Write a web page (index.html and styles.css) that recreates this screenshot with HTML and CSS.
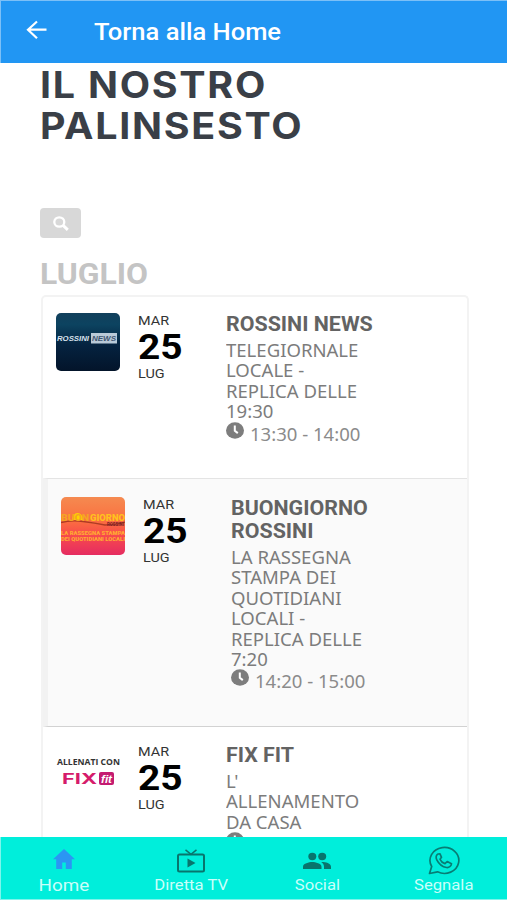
FILE: index.html
```html
<!DOCTYPE html>
<html lang="it">
<head>
<meta charset="utf-8">
<meta name="viewport" content="width=device-width, initial-scale=1">
<title>Il nostro palinsesto</title>
<link rel="stylesheet" href="styles.css">
</head>
<body>
<svg class="defs" width="0" height="0">
  <symbol id="clock" viewBox="0 0 18 17"><ellipse cx="9" cy="8.5" rx="9" ry="8.3" fill="#7d7d7d"/><path d="M8.8 3.5v5.2l3 2.4" fill="none" stroke="#fff" stroke-width="2"/></symbol>
</svg>
<div class="app">
  <header class="bar">
    <svg class="back" viewBox="0 0 22 20" width="22" height="20"><path d="M11 1.5 2 9.7l9 8.6M2.3 9.7H20.5" fill="none" stroke="#fff" stroke-width="2.2"/></svg>
    <span class="bar-title wide">Torna alla Home</span>
  </header>

  <main class="content">
    <h1><span class="wide">IL NOSTRO</span><span class="wide">PALINSESTO</span></h1>
    <button class="search" aria-label="Cerca"><svg viewBox="0 0 16 15" width="16" height="15"><ellipse cx="6.3" cy="6" rx="5" ry="4.7" fill="none" stroke="#fff" stroke-width="2.3"/><path d="m9.8 9.2 5 4.600" stroke="#fff" stroke-width="3"/></svg></button>
    <h2 class="wide">LUGLIO</h2>

    <section class="list">
      <article class="row first">
        <svg class="thumb" viewBox="0 0 64 58" width="64" height="58">
          <defs><linearGradient id="navy" x2="0" y2="1"><stop offset="0" stop-color="#12405c"/><stop offset=".2" stop-color="#0c4360"/><stop offset=".55" stop-color="#052340"/><stop offset="1" stop-color="#03142a"/></linearGradient></defs>
          <rect width="64" height="58" rx="5" fill="url(#navy)"/>
          <rect x="35" y="20" width="26" height="10.500" fill="#b9cad8"/>
          <text class="news" x="1" y="28" textLength="32" lengthAdjust="spacingAndGlyphs" fill="#dbe4ee">ROSSINI</text>
          <text class="news" x="36" y="28" textLength="24" lengthAdjust="spacingAndGlyphs" fill="#3d5470">NEWS</text>
        </svg>
        <div class="date"><span class="wide">MAR</span><b class="wide">25</b><span class="wide">LUG</span></div>
        <div class="info">
          <h3><span class="wide">ROSSINI NEWS</span></h3>
          <p><span class="wide">TELEGIORNALE</span><span class="wide">LOCALE -</span><span class="wide">REPLICA DELLE</span><span class="wide">19:30</span></p>
          <div class="time"><svg width="18" height="17"><use href="#clock"/></svg><span class="wide">13:30 - 14:00</span></div>
        </div>
      </article>

      <article class="row second">
        <svg class="thumb" viewBox="0 0 64 58" width="64" height="58">
          <defs><linearGradient id="dawn" x2="0" y2="1"><stop offset="0" stop-color="#f58a50"/><stop offset=".4" stop-color="#fb7040"/><stop offset=".65" stop-color="#f84b4c"/><stop offset="1" stop-color="#e52c61"/></linearGradient></defs>
          <rect width="64" height="58" rx="5" fill="url(#dawn)"/>
          <path d="M0 25.500Q10 23 22 24.500T44 28Q54 28 64 25" fill="none" stroke="#ae3b24" stroke-width="1.300"/>
          <path d="M11 23a5.500 7 0 0 1 11 0z" fill="#ffd500"/>
          <text class="dawn-title" x="0" y="24" textLength="28" lengthAdjust="spacingAndGlyphs" fill="#f5a524">BUON</text>
          <text class="dawn-title" x="29" y="24" textLength="35" lengthAdjust="spacingAndGlyphs" fill="#ffc01e">GIORNO</text>
          <text class="dawn-sub" x="46" y="29" textLength="17" lengthAdjust="spacingAndGlyphs" fill="#7c1f27">ROSSINI</text>
          <text class="dawn-text" x="0" y="37.500" textLength="64" lengthAdjust="spacingAndGlyphs">LA RASSEGNA STAMPA</text>
          <text class="dawn-text" x="0" y="43.500" textLength="64" lengthAdjust="spacingAndGlyphs">DEI QUOTIDIANI LOCALI</text>
        </svg>
        <div class="date"><span class="wide">MAR</span><b class="wide">25</b><span class="wide">LUG</span></div>
        <div class="info">
          <h3><span class="wide">BUONGIORNO</span><span class="wide">ROSSINI</span></h3>
          <p><span class="wide">LA RASSEGNA</span><span class="wide">STAMPA DEI</span><span class="wide">QUOTIDIANI</span><span class="wide">LOCALI -</span><span class="wide">REPLICA DELLE</span><span class="wide">7:20</span></p>
          <div class="time"><svg width="18" height="17"><use href="#clock"/></svg><span class="wide">14:20 - 15:00</span></div>
        </div>
      </article>

      <article class="row third">
        <svg class="thumb" viewBox="0 0 64 58" width="64" height="58">
          <text class="fix-top" x="1" y="20.500" textLength="63" lengthAdjust="spacingAndGlyphs">ALLENATI CON</text>
          <text class="fix" x="6" y="40" textLength="35" lengthAdjust="spacingAndGlyphs">FIX</text>
          <rect x="43" y="28" width="15" height="13" rx="2" fill="#c41b70"/>
          <text class="fit" x="45" y="38.500" textLength="11" lengthAdjust="spacingAndGlyphs">fit</text>
        </svg>
        <div class="date"><span class="wide">MAR</span><b class="wide">25</b><span class="wide">LUG</span></div>
        <div class="info">
          <h3><span class="wide">FIX FIT</span></h3>
          <p><span class="wide">L'</span><span class="wide">ALLENAMENTO</span><span class="wide">DA CASA</span></p>
          <div class="time"><svg width="18" height="17"><use href="#clock"/></svg></div>
        </div>
      </article>
    </section>
  </main>

  <nav class="tabs">
    <a class="tab home"><i><svg viewBox="0 0 24 20" width="24" height="20"><path d="M12 0 23 10.200h-3.200V20h-6v-6.500h-3.600V20h-6v-9.800H1z" fill="#2b96f3"/></svg></i><span class="wide">Home</span></a>
    <a class="tab tv"><i><svg viewBox="0 0 30 24" width="30" height="24"><g fill="none" stroke="#08756d" stroke-width="2"><rect x="2" y="5.500" width="26" height="17" rx="1.500"/><path d="m9.500.8 5.500 4.500L20.500.8" stroke-width="1.500"/></g><path d="M11.500 9.500v9l8-4.500z" fill="#08756d"/></svg></i><span class="wide">Diretta TV</span></a>
    <a class="tab social"><i><svg viewBox="0 0 30 18" width="30" height="18"><g fill="#08756d"><ellipse cx="10.300" cy="4.500" rx="4" ry="3.700"/><ellipse cx="20.200" cy="4.500" rx="4" ry="3.700"/><path d="M1 17v-2.300C1 11.500 7 10 10.200 10s9.300 1.500 9.300 4.700V17zM19.200 10.100c3.600-.2 9.800 1.200 9.800 4.600V17h-7v-2.300c0-2-1.100-3.500-2.800-4.600z"/></g></svg></i><span class="wide">Social</span></a>
    <a class="tab"><i><svg viewBox="0 0 32 29" width="32" height="29"><g fill="none" stroke="#087d74" stroke-width="1.700" stroke-linejoin="round"><path d="M1.500 27.500 3.700 20.500A14.400 13 0 1 1 9.500 25.800z"/><path d="M10 8c-2 1-2.400 3.500-1.200 5.800 2 4 5.800 7 9.800 7.700 2.300.3 4.700-1.300 4.900-3.800l-4.300-2.200-2.200 2.200c-2.300-.8-4.200-2.500-5-4.500l1.500-1.900L12 7.800z"/></g></svg></i><span class="wide">Segnala</span></a>
  </nav>
</div>
</body>
</html>
```
FILE: styles.css
```css
* { box-sizing: border-box; }
body { margin: 0; background: #fff; font-family: Roboto, "Liberation Sans", sans-serif; }
.defs { display: block; height: 0; }
.app { width: 507px; height: 900px; display: flex; flex-direction: column; overflow: hidden; }
.wide { display: block; width: max-content; white-space: nowrap; transform: scaleX(1.11); transform-origin: 0 50%; }
h1, h2, h3, p { margin: 0; }

.bar { flex: none; height: 63px; background: #2196f3; border-top: 1px solid #7cc0f7; border-left: 1px solid #7cc0f7; display: flex; align-items: center; padding-left: 25px; }
.back { margin-top: -4px; }
.bar-title { margin: 1px 0 0 46px; font-size: 23px; font-weight: 500; line-height: 28px; color: #fff; }

.content { flex: 1; min-height: 0; overflow: hidden; padding: 2px 38px 0 40px; }
h1 { font: 700 36.500px/41px Inter, sans-serif; color: #3a3f47; }
h1 .wide { transform: scaleX(1.08); letter-spacing: 1.6px; }
.search { display: flex; align-items: center; justify-content: center; width: 41px; height: 30px; margin: 61px 0 0; padding: 0; border: 0; border-radius: 4px; background: #d8d8d8; }
h2 { margin-top: 19px; font-size: 29px; line-height: 34px; font-weight: 700; color: #c4c4c4; }
h2.wide { transform: scaleX(1.1); }

.list { width: 428px; margin: 4px 0 0 1px; border: 2px solid #f3f3f3; border-bottom: 0; border-radius: 5px 5px 0 0; }
.row { display: flex; align-items: flex-start; }
.first { height: 181px; padding: 16px 0 0 13px; }
.second { height: 249px; padding: 18px 0 0 13px; background: #fafafa; border-left: 5px solid #f2f2f2; border-top: 1px solid #e4e4e4; border-bottom: 1px solid #d2d2d2; }
.third { height: 182px; padding: 17px 0 0 13px; }
.thumb { flex: none; width: 64px; height: 58px; }
.date { width: 88px; margin-left: 18px; color: #333; font-size: 13px; line-height: 15px; }
.date b { height: 38px; font-size: 35px; line-height: 40px; color: #000; }
.info { color: #777; font-family: "Noto Sans", "Open Sans", sans-serif; font-size: 18px; }
.info .wide { transform: scaleX(1.03); }
.info h3 { margin-bottom: 4px; font: 700 20px/23px Roboto, sans-serif; color: #636363; }
.info h3 .wide { transform: scaleX(1.07); }
.info p { line-height: 20.400px; color: #7c7c7c; }
.time { display: flex; gap: 6px; height: 24px; line-height: 24px; color: #8b8b8b; }

.tabs { flex: none; height: 63px; display: grid; grid-template-columns: repeat(4, 1fr); background: #00eedb; border-left: 1px solid #7df5ec; border-bottom: 1px solid #7df5ec; }
.tab { display: flex; flex-direction: column; align-items: center; justify-content: flex-end; color: #c9fffa; font-size: 15px; line-height: 20px; padding-bottom: 4px; }
.tab i, .tab svg { display: block; }
.home i { padding-bottom: 6px; }
.tv i { padding-bottom: 2px; }
.social i { padding-bottom: 5px; }
.tab .wide { transform-origin: 50% 50%; }
.home .wide { font-size: 17px; }

.thumb text { font-family: "Open Sans", sans-serif; font-weight: 700; }
.thumb .news { font: italic 700 8px "Liberation Sans", sans-serif; }
.thumb .dawn-title { font: 900 9px Roboto, sans-serif; }
.thumb .dawn-sub { font: 900 5px Roboto, sans-serif; }
.thumb .dawn-text { font: 900 6px Roboto, sans-serif; fill: #ffab32; }
.thumb .fix-top { font-size: 8px; fill: #333; }
.thumb .fix { font: 700 15px Inter, sans-serif; fill: #d51b6b; }
.thumb .fit { font: italic 700 11px "Liberation Sans", sans-serif; fill: #fff; }
```
